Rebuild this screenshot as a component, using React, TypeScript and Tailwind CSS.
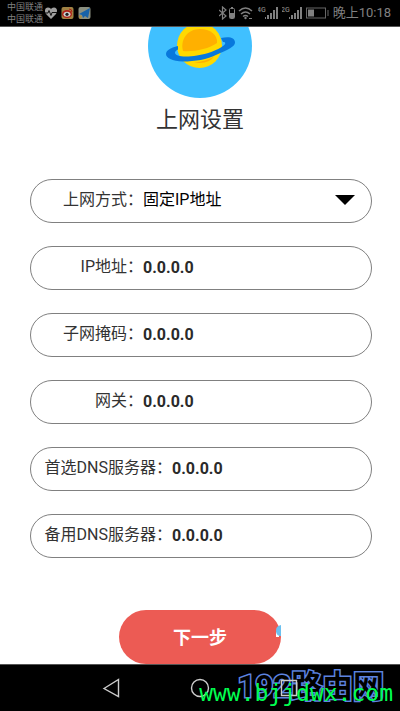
import React, { useState } from 'react';

interface FieldProps {
  id: string;
  label: string;
  wide?: boolean;
  value: string;
  onChange: (value: string) => void;
}

const FIELDS = [
  { id: 'ip', label: 'IP地址：' },
  { id: 'mask', label: '子网掩码：' },
  { id: 'gateway', label: '网关：' },
  { id: 'dns1', label: '首选DNS服务器：', wide: true },
  { id: 'dns2', label: '备用DNS服务器：', wide: true },
];

const SignalBars = ({ label }: { label: string }) => (
  <svg width="20" height="14" viewBox="0 0 20 14" fill="#808080" aria-hidden="true">
    <text x="-1" y="6" fontSize="7" fontWeight="500" fontFamily="Roboto, sans-serif">{label}</text>
    <rect x="7" y="11" width="1" height="2" />
    <rect x="9" y="9" width="2" height="4" />
    <rect x="12" y="7" width="2" height="6" />
    <rect x="15" y="4" width="2" height="9" />
    <rect x="18" y="1" width="2" height="12" />
  </svg>
);

const StatusBar = () => (
  <header className="flex h-[26px] items-center justify-between bg-black pl-[7px] pr-[9px] text-[#808080]">
    <div className="flex items-center">
      <div className="mr-[2px] text-[9px] leading-[12px]">
        <div>中国联通</div>
        <div>中国联通</div>
      </div>
      <svg width="46" height="14" viewBox="0 0 46 14" aria-hidden="true">
        <path d="M6 13 1 8C-1 5 0 1.500 3 1.500c2 0 3 1 3 2 0-1 1-2 3-2 3 0 4 3.500 2 6.500z" fill="#a0a0a0" />
        <path d="M0 7h3l1-2.500 2 5 1-3h5" fill="none" stroke="#111" />
        <rect x="16.500" y="1" width="12" height="12" rx="2" fill="#a08244" />
        <ellipse cx="22" cy="8" rx="5" ry="4" fill="#b02018" />
        <ellipse cx="22" cy="8.300" rx="3.500" ry="2.500" fill="#d0d0d0" />
        <circle cx="22" cy="8.300" r="1.600" fill="#222" />
        <path d="M24 3q3 0 3 3" fill="none" stroke="#b02018" />
        <rect x="33.500" y="1" width="12" height="12" rx="2" fill="#8b9080" />
        <path d="M34 12V9l3 1-1 3z" fill="#a58b48" />
        <path d="m34 8 11-6-2 10-3-2-2 2-1-3z" fill="#1762a8" />
      </svg>
    </div>
    <div className="flex items-center gap-[4px]">
      <svg width="35" height="14" viewBox="0 0 35 14" fill="none" stroke="#808080" aria-hidden="true">
        <path d="m0 4 7 6-3.500 3V1L7 4l-7 6" strokeWidth="1.200" />
        <rect x="10.500" y="2.500" width="5" height="10" rx="1" />
        <path d="M12 1.500h2" />
        <path d="M11 7h4v5h-4z" fill="#808080" stroke="none" />
        <path d="M20 5q6.500-6 13 0M22 8q4.500-4 9 0M24 10.500q2.500-2 5 0" strokeWidth="1.500" />
        <circle cx="26.500" cy="12" r="1.200" fill="#808080" stroke="none" />
        <path d="M30 12.500h3" />
      </svg>
      <SignalBars label="4G" />
      <SignalBars label="2G" />
      <svg width="23" height="12" viewBox="0 0 23 12" fill="none" stroke="#666" aria-hidden="true">
        <rect x=".500" y="1" width="19" height="10" />
        <path d="M2 2.500h6v7H2z" fill="#808080" stroke="none" />
        <path d="M22 3v6" />
      </svg>
      <span className="text-[13px] leading-[20px]">晚上10:18</span>
    </div>
  </header>
);

const PlanetLogo = () => (
  <svg width="104" height="71" viewBox="148 27 104 71" aria-hidden="true">
    <circle cx="200" cy="46" r="52" fill="#40c0ff" />
    <circle cx="199.500" cy="45.500" r="22.500" fill="#ffd900" />
    <path d="M183 51c-3-11 4-22 17-22 10 0 18 6 17 14-8 6-24 9-34 8z" fill="#ffb000" />
    <path d="M194 62.500q12-1 20-6-5 8-20 6z" fill="#ffb000" />
    <path
      d="M178 46C170 48 166 50.500 166 54c0 4 6 7 17 7.500 12 0 24-2 34-7 11-4.500 18-8 18-12 0-5-6-6.500-14-4.500l2 4c3 0 3 2 0 4-5 4-16 8-26 9.500-8 1.200-15 1.300-19 0-4-1.500-4-4 0-6z"
      fill="#0878dc"
    />
  </svg>
);

const rowClass = 'flex h-[44px] items-center rounded-full border border-[#808080] pb-[3px]';

const Field: React.FC<FieldProps> = ({ id, label, wide, value, onChange }) => (
  <div className={rowClass}>
    <label htmlFor={id} className={`shrink-0 text-right text-[#333] ${wide ? 'w-[141px]' : 'w-[112px]'}`}>
      {label}
    </label>
    <input
      id={id}
      value={value}
      onChange={(e) => onChange(e.target.value)}
      className="min-w-0 flex-1 bg-transparent pt-[2px] font-bold text-[#2a2a2a] outline-none"
    />
  </div>
);

export default function App() {
  const [mode, setMode] = useState('static');
  const [values, setValues] = useState<Record<string, string>>({});

  return (
    <div className="relative flex min-h-screen flex-col bg-white font-[Roboto,'Noto_Sans_CJK_SC',sans-serif]">
      <StatusBar />

      <main className="flex flex-1 flex-col items-center border-y border-[#555]">
        <PlanetLogo />
        <h1 className="mt-[6px] text-[22px] leading-[32px] text-[#333]">上网设置</h1>

        <form className="flex w-full flex-1 flex-col" onSubmit={(e) => e.preventDefault()}>
          <div className="mt-[43px] flex flex-col gap-[23px] pl-[30px] pr-[28px] text-[16px] leading-[24px]">
            <div className={`${rowClass} relative`}>
              <label htmlFor="mode" className="w-[112px] shrink-0 text-right text-[#333]">上网方式：</label>
              <select
                id="mode"
                value={mode}
                onChange={(e) => setMode(e.target.value)}
                className="min-w-0 flex-1 appearance-none bg-transparent text-black outline-none"
              >
                <option value="static">固定IP地址</option>
                <option value="dhcp">自动获取IP</option>
              </select>
              <svg className="pointer-events-none absolute right-[16px]" width="20" height="10" viewBox="0 0 20 10" aria-hidden="true">
                <path d="M0 0h20L10 10z" />
              </svg>
            </div>
            {FIELDS.map((f) => (
              <Field
                key={f.id}
                {...f}
                value={values[f.id] ?? '0.0.0.0'}
                onChange={(v) => setValues((prev) => ({ ...prev, [f.id]: v }))}
              />
            ))}
          </div>

          <button type="submit" className="relative mx-auto mt-auto h-[54px] w-[162px] rounded-full bg-[#ec5b54] text-[18px] font-bold text-white">
            下一步
            <svg className="absolute right-0 top-[15px]" width="5" height="12" viewBox="0 0 5 12" aria-hidden="true">
              <path d="M0 7h3v5H0z" fill="#fff" />
              <path d="M5 0C1 1 0 3 0 6s2 5 5 5z" fill="#6cc0ef" />
            </svg>
          </button>
        </form>
      </main>

      <nav className="relative flex h-[46px] items-center justify-center gap-[69px] bg-black">
        <span className="absolute right-[16px] top-0 text-[31px] font-bold leading-[44px] text-black [-webkit-text-stroke:3px_#5c83e0] [paint-order:stroke_fill]">
          192路由网
        </span>
        <button type="button" aria-label="返回" className="relative">
          <svg width="20" height="20" viewBox="0 0 20 20" fill="none" stroke="#ccc" strokeWidth="1.400"><path d="M3 10.500 17.500 1.500v17z" /></svg>
        </button>
        <button type="button" aria-label="主页" className="relative">
          <svg width="20" height="20" viewBox="0 0 20 20" fill="none" stroke="#ccc" strokeWidth="1.400"><circle cx="10" cy="10" r="8.500" /></svg>
        </button>
        <button type="button" aria-label="最近任务" className="relative">
          <svg width="20" height="20" viewBox="0 0 20 20" fill="none" stroke="#ccc" strokeWidth="1.400"><path d="M2.500 2.500h15v15h-15z" /></svg>
        </button>
        <span className="absolute right-[7px] top-[12px] font-['DejaVu_Sans_Mono',monospace] text-[23px] leading-[32px] text-[#00ff50]">
          www.bjjdwx.com
        </span>
      </nav>
    </div>
  );
}
